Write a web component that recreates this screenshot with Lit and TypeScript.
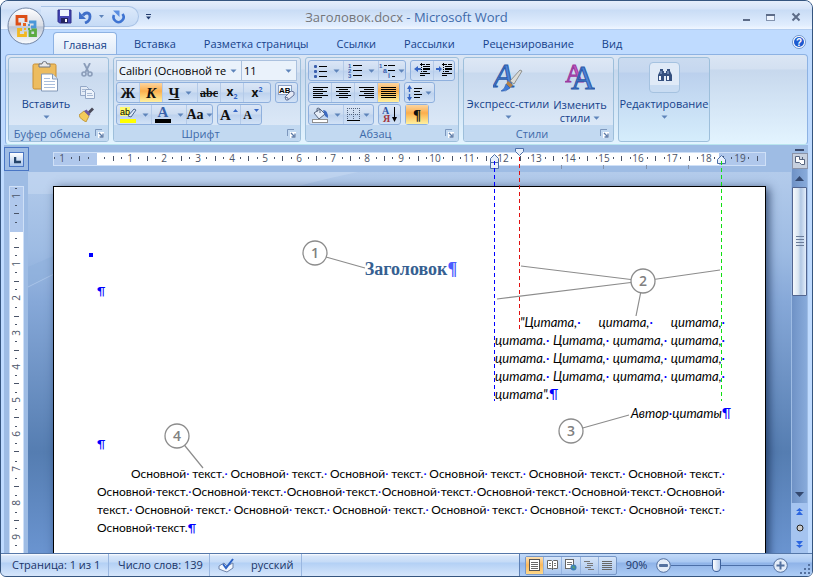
import { LitElement, html, svg, css } from "lit";
import { customElement } from "lit/decorators.js";

const caret = html`<svg class="caret" width="7" height="4"><path d="M0.5 0.5h6L3.5 3.8z" fill="#5e84ba" /></svg>`;

const launcher = html`<button class="launcher" aria-label="Параметры">
  <svg width="9" height="9">
    <path d="M0.5 7V0.5H7" fill="none" stroke="#7c97bd" />
    <rect x="3" y="3" width="6" height="6" fill="#fff" />
    <path d="M4 4l3 3M8 4.5V8H4.5" fill="none" stroke="#5c7ba8" stroke-width="1.3" />
  </svg>
</button>`;

const lines = (rows: number[][]) =>
  svg`${rows.map(([x, y, w]) => svg`<rect x=${x} y=${y} width=${w} height="1" fill="#000"/>`)}`;

const icon = {
  save: html`<svg width="15" height="15" viewBox="0 0 15 15">
    <path d="M1 1h13v13H2.5L1 12.500z" fill="#4546b5" stroke="#2c2d86" />
    <rect x="3" y="1" width="9" height="6" fill="#eef5ff" />
    <rect x="4" y="9" width="7" height="5" fill="#23245f" />
    <rect x="8" y="10" width="2" height="3" fill="#fff" />
  </svg>`,
  undo: html`<svg width="13" height="14" viewBox="0 0 13 14">
    <path d="M4 5.500C6 2 11 2 11 6.500S8.500 12 6 13" fill="none" stroke="#3f6fc9" stroke-width="2.800" />
    <path d="M0 1.500V9h7z" fill="#3f6fc9" />
  </svg>`,
  redo: html`<svg width="14" height="14" viewBox="0 0 14 14">
    <path d="M3 5A5 5 0 1 0 11.500 4" fill="none" stroke="#3f74d2" stroke-width="2.600" />
    <path d="M2 0.500h6.500V7z" fill="#5a8de0" />
  </svg>`,
  paste: html`<svg width="28" height="32" viewBox="0 0 28 32">
    <rect x="1" y="3" width="23" height="25" rx="1.500" fill="#edbc5f" stroke="#c98f35" />
    <path d="M7 6V3h3a2.500 2.500 0 0 1 5 0h3v3z" fill="#e8e8ea" stroke="#6f7684" />
    <path d="M9.500 13h11l5 5v12h-16z" fill="#fff" stroke="#8298b8" />
    <path d="M20.500 13v5h5" fill="#dbe7f6" stroke="#8298b8" />
    <path d="M12 17.500h6M12 20.500h11M12 23.500h11M12 26.500h11" stroke="#a9bedd" />
  </svg>`,
  cut: html`<svg width="12" height="14" viewBox="0 0 12 14">
    <path d="M3 0l4.500 9M9 0L4.500 9" stroke="#8b9db9" stroke-width="1.800" />
    <circle cx="3" cy="11" r="2" fill="none" stroke="#8b9db9" stroke-width="1.600" />
    <circle cx="9" cy="11" r="2" fill="none" stroke="#8b9db9" stroke-width="1.600" />
  </svg>`,
  copy: html`<svg width="15" height="13" viewBox="0 0 15 13">
    <path d="M0.500 0.500h6l2 2v7h-8z" fill="#e3ebf6" stroke="#93a7c6" />
    <path d="M5.500 3.500h6l3 3v6h-9z" fill="#edf3fb" stroke="#93a7c6" />
    <path d="M2 3.500h3M2 5.500h3M7 7.500h5M7 9.500h6" stroke="#a9bad4" />
  </svg>`,
  brush: html`<svg width="16" height="15" viewBox="0 0 16 15">
    <path d="M0 8l5-4 5 5-3 6C4 13 1 12 0 8z" fill="#f3cb5b" stroke="#b68b2d" stroke-width="0.800" />
    <path d="M5 4l2.500-1.500L11.500 7 10 9z" fill="#6c5aa5" />
    <path d="M9 4.500l4-4 2 2-4 4z" fill="#4a4a59" />
  </svg>`,
  clear: html`<svg width="17" height="16" viewBox="0 0 17 16">
    <rect x="0.500" y="0.500" width="13" height="9" fill="#f5f9ff" stroke="#8ba0c4" />
    <text x="1" y="8" font-family="Liberation Sans" font-weight="700" font-size="8">AB</text>
    <path d="M7 12l6-6 3 1v3l-6 5H8z" fill="#e5e9f5" stroke="#66759b" />
    <path d="M7 12l3 1v2" fill="none" stroke="#66759b" />
  </svg>`,
  marker: html`<svg width="17" height="17" viewBox="0 0 17 17">
    <rect width="10" height="9" y="1" fill="#fffb6b" />
    <text x="0" y="9" font-family="Liberation Sans" font-size="9">ab</text>
    <path d="M8 10l6-7 2 1-5 7z" fill="#dce8f8" stroke="#4b6690" />
    <rect y="13" width="16" height="4" fill="#ffff00" />
  </svg>`,
  color: html`<svg width="17" height="17" viewBox="0 0 17 17">
    <text x="8" y="11" text-anchor="middle" font-family="Liberation Serif" font-weight="700" font-size="15" fill="#3a63ab">A</text>
    <rect y="13" width="16" height="4" fill="#000" />
  </svg>`,
  bullets: html`<svg width="15" height="14">
    ${[1, 6, 11].map((y) => svg`<rect x="1" y=${y} width="3" height="3" rx="1" fill="#3a5fae"/>`)}
    ${lines([[6, 2, 8], [6, 7, 8], [6, 12, 8]])}
  </svg>`,
  numbers: html`<svg width="15" height="15">
    ${[1, 2, 3].map((n) => svg`<text x="0" y=${n * 5} font-family="Liberation Sans" font-weight="700" font-size="6" fill="#3a5fae">${n}</text>`)}
    ${lines([[5, 2, 9], [5, 7, 9], [5, 12, 9]])}
  </svg>`,
  multi: html`<svg width="17" height="16">
    <text x="0" y="5" font-family="Liberation Sans" font-weight="700" font-size="6" fill="#3a5fae">1</text>
    <text x="4" y="10" font-family="Liberation Sans" font-weight="700" font-size="7" fill="#3a5fae">a</text>
    <text x="9" y="15" font-family="Liberation Sans" font-weight="700" font-size="7" fill="#3a5fae">i</text>
    ${lines([[5, 2, 3], [9, 2, 7], [9, 7, 7], [13, 13, 3]])}
  </svg>`,
  outdent: html`<svg width="17" height="15">
    ${lines([[6, 1, 5], [12, 1, 4], [9, 3, 7], [9, 5, 7], [9, 6, 7], [9, 8, 4], [6, 10, 10], [6, 12, 5]])}
    <path d="M0 6l4-3v2h3v2H4v2z" fill="#3565c4" /><path d="M7.500 0v14" stroke="#000" stroke-dasharray="1 1" />
  </svg>`,
  indent: html`<svg width="17" height="15">
    ${lines([[6, 1, 5], [12, 1, 4], [9, 3, 7], [9, 5, 7], [9, 6, 7], [9, 8, 4], [6, 10, 10], [6, 12, 5]])}
    <path d="M6 6L3 3v2H0v2h3v2z" fill="#3565c4" /><path d="M7.500 0v14" stroke="#000" stroke-dasharray="1 1" />
  </svg>`,
  left: html`<svg width="15" height="12">${lines([[0, 0, 15], [0, 2, 10], [0, 4, 14], [0, 6, 10], [0, 8, 15], [0, 10, 9]])}</svg>`,
  center: html`<svg width="15" height="12">${lines([[0, 0, 15], [3, 2, 9], [0, 4, 14], [3, 6, 9], [0, 8, 15], [3, 10, 9]])}</svg>`,
  right: html`<svg width="15" height="12">${lines([[0, 0, 15], [5, 2, 10], [1, 4, 14], [5, 6, 10], [0, 8, 15], [6, 10, 9]])}</svg>`,
  justify: html`<svg width="15" height="12">${lines([0, 2, 4, 6, 8, 10].map((y) => [0, y, 15]))}</svg>`,
  spacing: html`<svg width="16" height="16">
    <path d="M2.500 2v12" stroke="#3565c4" stroke-width="1.400" stroke-dasharray="5 2" /><path d="M0 4l2.500-4L5 4zM0 12l2.500 4L5 12z" fill="#3565c4" />
    ${lines([[7, 3, 8], [7, 6, 6], [7, 9, 8], [7, 12, 6]])}
  </svg>`,
  fill: html`<svg width="17" height="16">
    <path d="M2 6l6-4 5 5-6 5z" fill="#e6edf8" stroke="#56647f" /><path d="M5 5V1.500Q7 0 8 2.500V6" fill="none" stroke="#56647f" />
    <path d="M11 3q5 0 5 8l-3-2z" fill="#3d6ac0" /><rect x="0.500" y="12.500" width="15" height="3" fill="#fff" stroke="#909090" />
  </svg>`,
  borders: html`<svg width="14" height="14">
    <path d="M0 0.500h13M0 6.500h13M0.500 0v12M6.500 0v12M12.500 0v12" fill="none" stroke="#51617c" stroke-dasharray="1 1" />
    <rect y="12" width="13" height="1" fill="#000" />
  </svg>`,
  sort: html`<svg width="16" height="17" viewBox="0 0 16 17">
    <text x="0" y="8" font-family="Liberation Serif" font-weight="700" font-size="10" fill="#2d55a5">А</text>
    <text x="1" y="16" font-family="Liberation Serif" font-weight="700" font-size="10" fill="#a3353d">Я</text>
    <path d="M12.500 1v11" stroke="#000" /><path d="M10 11h5l-2.500 5z" />
  </svg>`,
  styles: html`<svg width="30" height="31" viewBox="0 0 30 31">
    <text x="0" y="25" font-family="Liberation Serif" font-style="italic" font-size="34" fill="#4d83d8" stroke="#2b5aa8" stroke-width="1">A</text>
    <path d="M17 19L27 8l2 1-8 13z" fill="#dcdcd8" stroke="#7d7d78" stroke-width="0.800" />
    <path d="M15 19l5 4-3 3-4-4z" fill="#b3824a" /><path d="M13 22l4 4q-4 4-9 3 4-2 5-7z" fill="#3f7bd8" stroke="#2b5aa8" stroke-width="0.600" />
  </svg>`,
  change: html`<svg width="30" height="29" viewBox="0 0 30 29">
    <text x="0" y="20" font-family="Liberation Serif" font-size="26" fill="#c65cc4" stroke="#9b3a9f" stroke-width="1">A</text>
    <text x="6" y="27" font-family="Liberation Serif" font-size="33" fill="#4d83d8" stroke="#2b5aa8" stroke-width="1">A</text>
  </svg>`,
  find: html`<svg width="16" height="14" viewBox="0 0 16 14">
    <path d="M3 1h3v2h1v2h2V3h1V1h3v2l2 4v6H9V8H7v5H1V7l2-4z" fill="#35507f" />
    <path d="M2 8h2v4H2zM10 8h2v4h-2z" fill="#f3f7fd" /><path d="M4 3v3M11 3v3" stroke="#9db5dc" />
  </svg>`,
};

@customElement("app-root")
export class AppRoot extends LitElement {
  static styles = css`
    :host {
      display: flex; flex-direction: column; height: 100vh; box-sizing: border-box; position: relative;
      border: 1px solid #35557f; border-radius: 8px 8px 6px 6px; overflow: hidden;
      background: #bfdbff; color: #15428b;
      font: 11px/16px "Open Sans", "Noto Sans", sans-serif;
    }
    * { box-sizing: border-box; }
    svg { display: block; flex: none; }
    button, select, input { font: inherit; color: inherit; margin: 0; padding: 0; border: 0; background: none; border-radius: 0; }
    button { display: flex; align-items: center; justify-content: center; white-space: nowrap; }

    .title { display: flex; align-items: center; height: 29px; padding-top: 3px; flex: none; position: relative;
      background: linear-gradient(#e6eefb 0, #d5e3f8 8px, #c9dcf5 9px, #e0edfe 24px, #f1f7ff); border-bottom: 1px solid #b3cdf0; }
    .quick { display: flex; align-items: center; gap: 7px; margin-left: 40px; width: 98px; height: 21px; padding-left: 16px;
      border: 1px solid #a9c3e6; border-left: 0; border-radius: 0 11px 11px 0; background: linear-gradient(#dce9fa, #c6dbf6); }
    .more { margin-left: 6px; }
    h1 { position: absolute; left: 0; right: 0; margin: 0; text-align: center; font-size: 13px; line-height: 18px; font-weight: 400; color: #3e6aaa; pointer-events: none; }
    h1 span { color: #74767a; }
    .window { margin-left: auto; margin-right: 10px; display: flex; gap: 15px; }
    .orb { position: absolute; left: 6px; top: 6px; }

    .tabs { display: flex; height: 24px; flex: none; align-items: flex-end; padding: 0 6px 0 52px; background: #bfdbff; position: relative; }
    .tab { height: 22px; padding: 2px 14px 0; }
    .tab.on { width: 64px; padding: 2px 0 0; margin-right: 3px; border: 1px solid #8db2e3; border-bottom: 0; border-radius: 4px 4px 0 0;
      background: linear-gradient(#f6faff, #e0ebf8); }
    .help { margin: 0 0 5px auto; }

    .ribbon { flex: none; display: flex; gap: 4px; height: 91px; margin: 0 4px; padding: 2px; border: 1px solid #8db2e3; border-bottom-color: #b9e5ee; border-radius: 4px;
      background: linear-gradient(#dbe6f4 0, #d3e0f1 14px, #c7d8ed 15px, #e3f4ff); }
    .group { display: flex; flex: none; flex-direction: column; border: 1px solid #9dbfdb; border-radius: 3px; overflow: hidden;
      background: linear-gradient(#dee8f5 0, #d4e1f2 14px, #c8d9ee 15px, #dbe8f7 68px); }
    .clip { width: 101px; } .font { width: 188px; } .para { width: 154px; } .style { width: 151px; } .edit { width: 92px; }
    .content { flex: 1; display: flex; min-height: 0; }
    .rows { flex-direction: column; gap: 1px; padding: 2px 2px 0; }
    .foot { height: 16px; flex: none; display: flex; align-items: center; background: #c2d9f1; color: #3e6aaa; line-height: 15px; padding-right: 4px; }
    .foot span { flex: 1; text-align: center; }
    .row { display: flex; gap: 4px; height: 21px; }
    .set { display: flex; height: 21px; border: 1px solid #8fb0dd; border-radius: 3px; background: linear-gradient(#dbe6f6 0, #ccdcf1 9px, #bdd2ee 10px, #d2e2f6); }
    .set button { width: 23px; gap: 2px; border-right: 1px solid #b4cae8; color: #111; }
    .set button:last-child { border-right: 0; flex: 1; }
    .set .w { width: 35px; gap: 5px; }
    .set .on-btn { background: linear-gradient(#fcd5a0, #fbae4c 8px, #fdd477 14px, #fff0a0); }
    .serif { font-family: "Liberation Serif", serif; font-weight: 700; font-size: 15px; }
    .k { font-style: italic; } .u { text-decoration: underline; }
    .s { text-decoration: line-through; font-size: 12px; color: #444; }
    .sm { font-size: 12px; } .md { font-size: 14px; }
    .x { font: 700 12px/14px "Open Sans", sans-serif; }
    .x sub, .x sup { font-size: 7px; line-height: 7px; color: #3565c4; }
    .w23 { width: 23px; } .w24 { width: 24px; } .w31 { width: 31px; } .w45 { width: 45px; }
    .w66 { width: 66px; } .w92 { width: 92px; } .w97 { width: 97px; } .w98 { width: 98px; } .w155 { width: 155px; }
    .combo { position: relative; display: block; height: 21px; border: 1px solid #abc1de; background: #eaf2fb; }
    .combo select { display: block; appearance: none; width: 100%; height: 19px; padding: 0 0 0 2px; color: #000; }
    .combo .caret { position: absolute; right: 4px; top: 8px; }
    .c1 { width: 126px; } .c2 { width: 56px; margin-left: -5px; }
    .big { flex-direction: column; justify-content: flex-start; }
    .clip .big { width: 66px; padding-top: 3px; gap: 3px; margin-left: 4px; }
    .side { display: flex; flex-direction: column; align-items: center; justify-content: space-between; width: 16px; padding: 5px 0 3px; }
    .style .big { padding-top: 4px; gap: 3px; }
    .style .b1 { width: 88px; } .style .b2 { width: 56px; }
    .two { line-height: 13px; padding-top: 4px; }
    .line2 { display: flex; gap: 3px; align-items: center; justify-content: center; }
    .edit { background: linear-gradient(#cbdbf0 0, #c5d7ef 14px, #bbd0ed 15px, #d5edfc); }
    .edit .big { width: 100%; padding-top: 4px; gap: 3px; }
    .tile { width: 31px; height: 31px; padding: 5px 7px; border: 1px solid #a5c2e0; border-radius: 4px; background: linear-gradient(#e0eaf7 22px, #c9dcf2 22px); }

    main { flex: 1; min-height: 0; display: grid; grid-template-columns: 24px 1fr 17px; grid-template-rows: 27px 1fr; position: relative; margin: 0 4px 0 3px; overflow: hidden; background: #9ebce4; }
    .corner { margin: 2px 0 1px; width: 25px; border: 1px solid #4a76c4; display: grid; place-items: center; padding: 0; }
    .corner span { width: 15px; height: 15px; border: 1px solid #4a76c4; background: linear-gradient(#fff, #a9c5ec); padding: 4px 0 0 4px; }
    .hruler { margin: 7px 25px 6px 25px; border: 1px solid #cfe0f7; background: linear-gradient(to right, #b0c8ec 43px, #fff 43px calc(100% - 46px), #b0c8ec calc(100% - 46px)); overflow: hidden; }
    .vruler { margin: 14px 0 0 5px; width: 15px; border: 1px solid #cfe0f7; border-bottom: 0; background: linear-gradient(#b0c8ec 45px, #fff 45px); overflow: hidden; }
    .num { font: 10px "Open Sans", sans-serif; fill: #4a5468; }
    .desk { position: relative; overflow: hidden; background: linear-gradient(#b3cbeb 0, #9dbbe3 80px, #86a8d8 130px, #557db1 280px, #6a94d0); }
    .glow { position: absolute; inset: 0; width: 100%; height: 100%; }
    .page { position: relative; margin: 14px 25px 0 25px; height: 100%; padding: 71px 40px 0 43px; background: #fff; color: #000;
      border: 1px solid #000; box-shadow: 3px 2px 9px rgba(10, 30, 70, .7); font: 12px/18px Lato, "Open Sans", sans-serif; }
    .dot { position: absolute; left: 35px; top: 66px; width: 4px; height: 4px; background: #00f; }
    .page h2 { margin: 0; text-align: center; font: 700 18px/22px "Liberation Serif", serif; color: #365f91; }
    .page h2 i { color: #4a5cff; }
    .page p { margin: 0; }
    i { font-style: normal; color: #00f; }
    .ln { display: flex; justify-content: space-between; white-space: nowrap; }
    .empty { padding-top: 2px; height: 21px; }
    .quote { width: 230px; margin: 12px 0 0 auto; font-style: italic; font-size: 13px; }
    .quote .first { padding-left: 25px; }
    .page .author { text-align: right; font-style: italic; font-size: 13px; margin-right: -6px; padding-top: 1px; }
    .page .gap { margin-top: 13px; }
    .page .body { margin-top: 12px; }
    .body .first { padding-left: 34px; }
    .notes { position: absolute; left: 0; top: 0; width: 100%; height: 100%; pointer-events: none; }
    .notes text { font: 600 14px "Open Sans", sans-serif; fill: #808080; }

    .scroll { grid-row: 1 / 3; grid-column: 3; display: flex; flex-direction: column; align-items: center; padding-top: 4px; background: #9ebce4; }
    .split { width: 9px; height: 2px; background: #3b4a6b; flex: none; }
    .toggle { width: 16px; height: 16px; margin-top: 2px; border: 1px solid #8a93a8; background: #c7d0de; flex: none; }
    .track { width: 15px; flex: 1; display: flex; flex-direction: column; align-items: center; background: linear-gradient(to right, #6f92c6, #88abdb); }
    .arrow { height: 18px; width: 15px; flex: none; }
    .thumb { width: 15px; height: 109px; border: 1px solid #52658f; border-radius: 1px; background: linear-gradient(to right, #f5f9fd, #dbe6f1 40%, #b2c8e4 60%, #e4eefa); }
    .track .down { margin-top: auto; }
    .browse { width: 17px; height: 50px; flex: none; display: flex; flex-direction: column; align-items: center; justify-content: space-around; background: #a5c4f0; }

    .status { flex: none; display: flex; align-items: stretch; height: 23px; border-top: 1px solid #5577a8; color: #1a3568; white-space: nowrap;
      background: linear-gradient(#fff 0, #d7e6f9 2px, #c5dbf7 8px, #b3d0f5 9px, #d6e6fb); }
    .cell { display: flex; align-items: center; border-right: 1px solid #9ab7e0; padding: 0 9px; }
    .s1 { width: 108px; padding-left: 11px; } .s2 { width: 101px; } .s3 { width: 92px; gap: 16px; padding: 0 8px; }
    .tools { margin-left: auto; width: 293px; display: flex; align-items: center; border-left: 1px solid #5d80b5; padding-left: 5px; position: relative;
      background: linear-gradient(#c3daf8 0, #a9c8f2 8px, #8fb3e8 9px, #aecdf5); }
    .views { display: flex; width: 92px; height: 19px; border: 1px solid #7797c7; border-radius: 2px; background: linear-gradient(#d5e4f8, #a9c6ee); }
    .views button { flex: 1; border-right: 1px solid #95b3df; }
    .views button:last-child { border: 0; }
    .views .on-btn { background: linear-gradient(#fce0b4, #fbb95c 8px, #fdd88a); }
    .pct { width: 39px; text-align: center; }
    input[type="range"] { appearance: none; width: 102px; height: 17px; background: linear-gradient(#4c6fa8, #4c6fa8) center / 100% 1px no-repeat; }
    input::-webkit-slider-thumb { appearance: none; width: 9px; height: 13px; border: 1px solid #3d619b; border-radius: 1px 1px 5px 5px; background: linear-gradient(to right, #fff, #b7cdee); }
    .grip { position: absolute; right: 2px; bottom: 2px; }
  `;

  private group(cls: string, name: string, body: unknown) {
    return html`<section class="group ${cls}">${body}<div class="foot"><span>${name}</span>${launcher}</div></section>`;
  }

  private scale(from: number, to: number, zero: number, vertical: boolean) {
    const marks = [];
    for (let k = from; k <= to; k++) {
      if (k === 0) continue;
      const p = zero + Math.round((k * 144) / 17) + (vertical ? Math.round(k / 18) : 0);
      const n = Math.abs(k / 4);
      if (k % 4 === 0) {
        marks.push(vertical
          ? svg`<text class="num" text-anchor="middle" transform="rotate(-90 10 ${p})" x="10" y=${p}>${n}</text>`
          : svg`<text class="num" text-anchor="middle" x=${p} y="9">${n}</text>`);
      } else {
        const len = k % 2 === 0 ? 5 : 2;
        const at = (vertical ? 6 : 5) - Math.floor(len / 2);
        marks.push(vertical
          ? svg`<rect x=${at} y=${p} width=${len} height="1" fill="#4a5468"/>`
          : svg`<rect x=${p} y=${at} width="1" height=${len} fill="#4a5468"/>`);
      }
    }
    return html`<svg width=${vertical ? "13" : "100%"} height=${vertical ? "400" : "13"}>${marks}</svg>`;
  }

  private line(text: string, cls = "") {
    return html`<div class="ln ${cls}">${text.split(" ").map((w) => html`<span>${w}<i>·</i></span>`)}</div>`;
  }

  private callout(n: number, x: number, y: number) {
    return svg`<circle cx=${x} cy=${y} r="12" fill="#fff" stroke="#8c8c8c" stroke-width="1.300"/>
      <text x=${x} y=${y + 5} text-anchor="middle">${n}</text>`;
  }

  render() {
    const quote = "цитата. Цитата, цитата, цитата,";
    const pair = "Основной текст.";
    return html`
      <header class="title">
        <div class="quick">
          <button aria-label="Сохранить">${icon.save}</button>
          <button aria-label="Отменить">${icon.undo}</button>
          <svg width="5" height="3"><path d="M0 0h5L2.500 3z" fill="#5e84ba" /></svg>
          <button aria-label="Повторить">${icon.redo}</button>
        </div>
        <button class="more" aria-label="Настройка панели"><svg width="7" height="6"><rect x="1" width="5" height="1" fill="#223c6e" /><path d="M1 2.500h5L3.500 5.500z" fill="#223c6e" /></svg></button>
        <h1><span>Заголовок.docx</span> - Microsoft Word</h1>
        <div class="window">
          <button aria-label="Свернуть"><svg width="9" height="12"><rect x="1" y="8" width="7" height="2" fill="#5d6c88" /></svg></button>
          <button aria-label="Развернуть"><svg width="10" height="12"><rect x="0.500" y="3.500" width="8" height="6" fill="#eef4fd" stroke="#8393ae" /><rect y="3" width="9" height="2" fill="#5d6c88" /></svg></button>
          <button aria-label="Закрыть"><svg width="11" height="12"><path d="M1.500 2.500l7 7M8.500 2.500l-7 7" stroke="#5d6c88" stroke-width="2" /></svg></button>
        </div>
      </header>
      <nav class="tabs">
        <button class="tab on">Главная</button>
        ${["Вставка", "Разметка страницы", "Ссылки", "Рассылки", "Рецензирование", "Вид"].map((t) => html`<button class="tab">${t}</button>`)}
        <button class="help" aria-label="Справка">
          <svg width="14" height="14"><circle cx="7" cy="7" r="6.500" fill="#fff" stroke="#6f94cc" /><circle cx="7" cy="7" r="5" fill="#1d5ad0" />
            <text x="7" y="11" text-anchor="middle" font-family="Liberation Sans" font-weight="700" font-size="10" fill="#fff">?</text></svg>
        </button>
      </nav>
      <button class="orb" aria-label="Office">
        <svg width="38" height="38" viewBox="0 0 38 38">
          <defs>
            <linearGradient id="o" x2="0" y2="1"><stop stop-color="#fff" /><stop offset=".5" stop-color="#d8dce4" /><stop offset=".52" stop-color="#bcc6d6" /><stop offset="1" stop-color="#fbfdff" /></linearGradient>
          </defs>
          <circle cx="19" cy="19" r="18" fill="url(#o)" stroke="#7185a5" />
          <g fill="none" stroke-width="2.800">
            <path d="M14 17H10V9.500h9V15" stroke="#dc4f17" /><path d="M22 15h6v5h-4" stroke="#4c97d8" />
            <path d="M15 22.500H11.500v6h7v-4" stroke="#f2b821" /><path d="M23 23v5.500h5.500V23h-4" stroke="#5cab42" />
          </g>
          <rect x="16" y="16" width="3" height="3" fill="#e6651e" /><rect x="21" y="17" width="2" height="2" fill="#4c97d8" />
          <rect x="17" y="21" width="2" height="2" fill="#f2b821" /><rect x="21" y="21" width="2" height="2" fill="#5cab42" />
        </svg>
      </button>

      <div class="ribbon">
        ${this.group("clip", "Буфер обмена", html`<div class="content">
          <button class="big">${icon.paste}<span class="txt">Вставить</span>${caret}</button>
          <div class="side">
            <button aria-label="Вырезать">${icon.cut}</button><button aria-label="Копировать">${icon.copy}</button><button aria-label="Формат по образцу">${icon.brush}</button>
          </div></div>`)}
        ${this.group("font", "Шрифт", html`<div class="content rows">
          <div class="row">
            <label class="combo c1"><select aria-label="Шрифт"><option>Calibri (Основной те</option></select>${caret}</label>
            <label class="combo c2"><select aria-label="Размер"><option>11</option></select>${caret}</label>
          </div>
          <div class="row">
            <div class="set w155"><button class="serif">Ж</button><button class="serif k on-btn">К</button><button class="serif w"><span class="u">Ч</span>${caret}</button>
              <button class="serif s">abc</button><button class="x"><span>x<sub>2</sub></span></button><button class="x"><span>x<sup>2</sup></span></button></div>
            <div class="set w23"><button aria-label="Очистить формат">${icon.clear}</button></div>
          </div>
          <div class="row">
            <div class="set w97"><button class="w" aria-label="Выделение">${icon.marker}${caret}</button><button class="w" aria-label="Цвет текста">${icon.color}${caret}</button><button class="serif md">Aa${caret}</button></div>
            <div class="set w45"><button class="serif">A<svg width="5" height="12"><path d="M0 3L2.500 0 5 3z" fill="#3565c4" /></svg></button><button class="serif sm">A<svg width="5" height="12"><path d="M0 0h5L2.500 3z" fill="#3565c4" /></svg></button></div>
          </div></div>`)}
        ${this.group("para", "Абзац", html`<div class="content rows">
          <div class="row">
            <div class="set w98"><button class="w" aria-label="Маркеры">${icon.bullets}${caret}</button><button class="w" aria-label="Нумерация">${icon.numbers}${caret}</button><button aria-label="Многоуровневый список">${icon.multi}${caret}</button></div>
            <div class="set w45"><button aria-label="Уменьшить отступ">${icon.outdent}</button><button aria-label="Увеличить отступ">${icon.indent}</button></div>
          </div>
          <div class="row">
            <div class="set w92"><button aria-label="Влево">${icon.left}</button><button aria-label="По центру">${icon.center}</button><button aria-label="Вправо">${icon.right}</button><button class="on-btn" aria-label="По ширине">${icon.justify}</button></div>
            <div class="set w31"><button aria-label="Интервал">${icon.spacing}${caret}</button></div>
          </div>
          <div class="row">
            <div class="set w66"><button class="w" aria-label="Заливка">${icon.fill}${caret}</button><button aria-label="Границы">${icon.borders}${caret}</button></div>
            <div class="set w23"><button aria-label="Сортировка">${icon.sort}</button></div>
            <div class="set w24"><button class="on-btn serif">¶</button></div>
          </div></div>`)}
        ${this.group("style", "Стили", html`<div class="content">
          <button class="big b1">${icon.styles}<span class="txt">Экспресс-стили</span>${caret}</button>
          <button class="big b2">${icon.change}<span class="two">Изменить<span class="line2">стили ${caret}</span></span></button></div>`)}
        <section class="group edit"><button class="big"><span class="tile">${icon.find}</span><span>Редактирование</span>${caret}</button></section>
      </div>

      <main>
        <button class="corner" aria-label="Табуляция"><span><svg width="7" height="7"><path d="M1 0v5h6" fill="none" stroke="#24446b" stroke-width="2.500" /></svg></span></button>
        <div class="hruler">${this.scale(-5, 78, 42, false)}</div>
        <div class="vruler">${this.scale(-5, 37, 43, true)}</div>
        <div class="desk">
          <svg class="glow">
            <path d="M0 0H330Q300 6 240 22H0z" fill="#c9dcf4" opacity=".5" />
            <path d="M0 95L30 82V101L0 115z" fill="#8fb0dc" opacity=".6" /><path d="M0 115L30 100" stroke="#b4cdee" opacity=".7" />
          </svg>
          <article class="page">
            <span class="dot"></span>
            <h2>Заголовок<i>¶</i></h2>
            <p class="empty"><i>¶</i></p>
            <div class="quote">
              ${this.line('"Цитата, цитата, цитата,', "first")}${this.line(quote)}${this.line(quote)}${this.line(quote)}
              <div>цитата".<i>¶</i></div>
            </div>
            <p class="author">Автор<i>·</i>цитаты<i>¶</i></p>
            <p class="gap"><i>¶</i></p>
            <div class="body">
              ${this.line(Array(6).fill(pair).join(" "), "first")}
              ${this.line(Array(6).fill(pair).join(" ") + " Основной")}
              ${this.line("текст. " + Array(6).fill(pair).join(" "))}
              <div>Основной<i>·</i>текст.<i>¶</i></div>
            </div>
          </article>
        </div>
        <div class="scroll">
          <span class="split"></span>
          <button class="toggle" aria-label="Линейка"><svg width="12" height="12"><path d="M1.500 1.500h4v3h5v5h-3l-2-2h-4z" fill="#fff" stroke="#56647f" /><path d="M8.500 2v3" stroke="#56647f" /></svg></button>
          <div class="track">
            <button class="arrow" aria-label="Вверх"><svg width="9" height="5"><path d="M0 5L4.500 0 9 5z" fill="#33486f" /></svg></button>
            <div class="thumb"><svg width="13" height="107"><path d="M3 48.500h8M3 51.500h8M3 54.500h8M3 57.500h8" stroke="#6b7c99" /></svg></div>
            <button class="arrow down" aria-label="Вниз"><svg width="9" height="5"><path d="M0 0h9L4.500 5z" fill="#33486f" /></svg></button>
          </div>
          <div class="browse">
            <button aria-label="Предыдущая"><svg width="7" height="7"><path d="M0 3L3.500 0 7 3zM0 7l3.500-4L7 7z" fill="#2c66e0" /></svg></button>
            <button aria-label="Объект перехода"><svg width="8" height="8"><circle cx="4" cy="4" r="3" fill="#ccc" stroke="#222" /></svg></button>
            <button aria-label="Следующая"><svg width="7" height="7"><path d="M0 0h7L3.500 4zM0 4h7L3.500 7z" fill="#2c66e0" /></svg></button>
          </div>
        </div>
        <svg class="notes">
          <path d="M557.500 20v4M599.500 20v4M642.500 20v4M684.500 20v4" stroke="#8392ab" />
          <g stroke="#4c6fa8" fill="#e8f0fb">
            <path d="M486.500 17.500v-4l4-4 4 4v4zM486.500 17.500h8v6h-8z" /><path d="M511.500 3.500h8v3l-4 4-4-4z" /><path d="M713.500 18.500v-4l4-4 4 4v4z" />
          </g>
          <g fill="none" stroke-dasharray="4 3">
            <path d="M490.500 16v240" stroke="#00f" /><path d="M515.500 12v172" stroke="#e01010" /><path d="M717.500 16v240" stroke="#0fe010" />
          </g>
          <g fill="none" stroke="#8c8c8c" stroke-width="1.200">
            <path d="M322 112l39 11M639 136L517 121M639 136L493 154M639 136l77-11M639 136l-7 35M568 286l57-16M173 291l26 32" />
          </g>
          ${this.callout(1, 311, 108)}${this.callout(2, 639, 136)}${this.callout(3, 567, 286)}${this.callout(4, 173, 291)}
        </svg>
      </main>

      <footer class="status">
        <span class="cell s1">Страница: 1 из 1</span><span class="cell s2">Число слов: 139</span>
        <span class="cell s3"><svg width="17" height="15"><path d="M1 8l5-3 3 3 6-3v5l-6 4-3-1-5-2z" fill="#f3f7fd" stroke="#6f83a8" /><path d="M5 6l3 4 7-9" fill="none" stroke="#2d62c4" stroke-width="2" /></svg>русский</span>
        <div class="tools">
          <div class="views">
            <button class="on-btn" aria-label="Разметка"><svg width="11" height="12"><rect x="0.500" y="0.500" width="10" height="11" fill="#fff" stroke="#555" /><path d="M2 3.500h7M2 5.500h7M2 7.500h7M2 9.500h7" stroke="#666" /></svg></button>
            <button aria-label="Чтение"><svg width="11" height="12"><path d="M0.500 1.500h4l1 1 1-1h4v8h-4l-1 1-1-1h-4zM5.500 2v9" fill="#fff" stroke="#666" /><path d="M2 4.500h2M2 6.500h2M7 4.500h2M7 6.500h2" stroke="#777" /></svg></button>
            <button aria-label="Веб"><svg width="12" height="12"><rect x="0.500" y="0.500" width="8" height="9" fill="#fff" stroke="#666" /><path d="M2 3.500h5M2 5.500h5" stroke="#777" /><circle cx="8.500" cy="8.500" r="3" fill="#3d7fb5" /><path d="M7 8l2-1 1 3z" fill="#5fae58" /></svg></button>
            <button aria-label="Структура"><svg width="10" height="11"><path d="M0 1.500h6M3 3.500h6M3 5.500h6M1 7.500h6M4 9.500h6" stroke="#777" /></svg></button>
            <button aria-label="Черновик"><svg width="10" height="11"><path d="M0 1.500h10M0 3.500h10M0 5.500h10M0 7.500h10M0 9.500h10" stroke="#666" /></svg></button>
          </div>
          <span class="pct">90%</span>
          <button aria-label="Уменьшить"><svg width="15" height="15"><circle cx="7.500" cy="7.500" r="6.800" fill="#e3ecf8" stroke="#54719f" /><rect x="3" y="6" width="9" height="3" rx="1" fill="#54719f" /></svg></button>
          <input type="range" aria-label="Масштаб" min="0" max="100" value="44" />
          <button aria-label="Увеличить"><svg width="15" height="15"><circle cx="7.500" cy="7.500" r="6.800" fill="#e3ecf8" stroke="#54719f" /><path d="M3.500 7.500h8M7.500 3.500v8" stroke="#54719f" stroke-width="2" /></svg></button>
          <svg class="grip" width="11" height="11"><path d="M9 1h2v2H9zM5 5h2v2H5zM9 5h2v2H9zM1 9h2v2H1zM5 9h2v2H5zM9 9h2v2H9z" fill="#54719f" /></svg>
        </div>
      </footer>
    `;
  }
}
